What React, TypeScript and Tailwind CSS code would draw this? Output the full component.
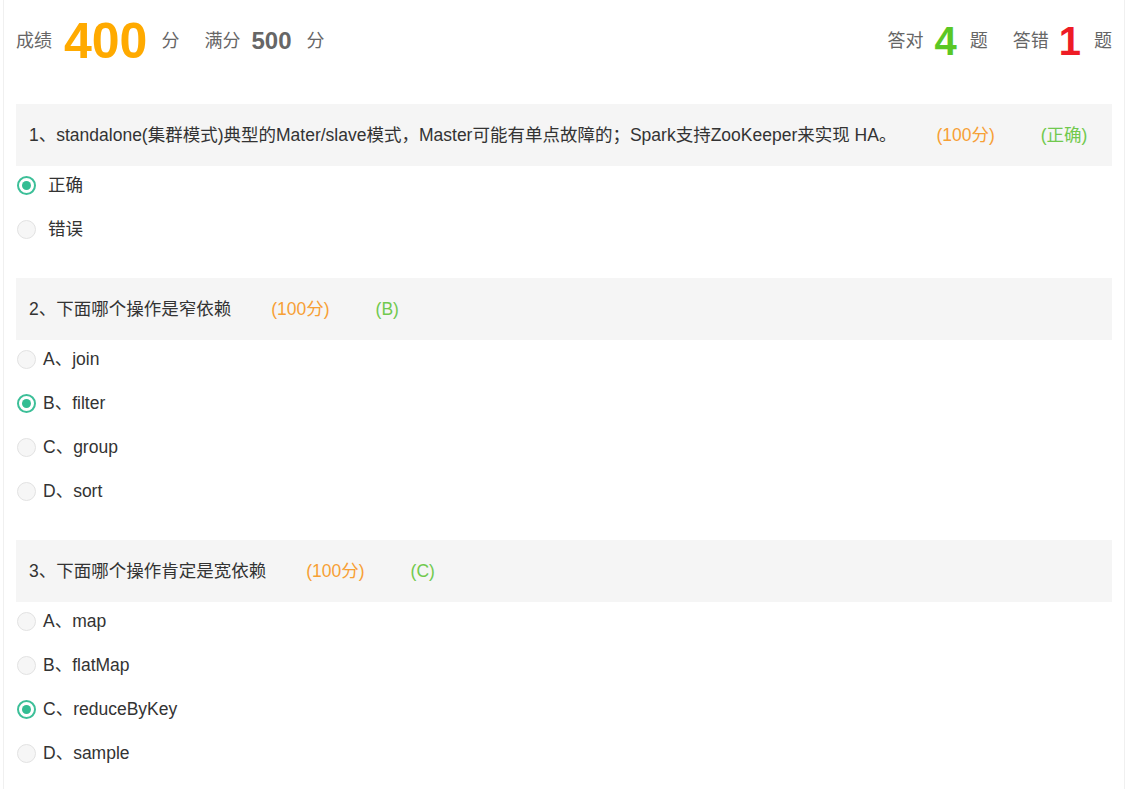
import React from "react";

const FONT = { fontFamily: '"Liberation Sans", Arial, "Noto Sans CJK SC", sans-serif' };

type Q = {
  title: string;
  answer: string;
  options: string[];
  selected: number;
  wide?: boolean;
};

const questions: Q[] = [
  {
    title: "1、standalone(集群模式)典型的Mater/slave模式，Master可能有单点故障的；Spark支持ZooKeeper来实现 HA。",
    answer: "(正确)",
    options: ["正确", "错误"],
    selected: 0,
    wide: true,
  },
  {
    title: "2、下面哪个操作是窄依赖",
    answer: "(B)",
    options: ["A、join", "B、filter", "C、group", "D、sort"],
    selected: 1,
  },
  {
    title: "3、下面哪个操作肯定是宽依赖",
    answer: "(C)",
    options: ["A、map", "B、flatMap", "C、reduceByKey", "D、sample"],
    selected: 2,
  },
];

function Radio({ checked }: { checked: boolean }) {
  return checked ? (
    <span className="flex h-[19px] w-[19px] shrink-0 items-center justify-center rounded-full border-2 border-[#3cbf98] bg-white">
      <span className="h-[9px] w-[9px] rounded-full bg-[#33bd93]" />
    </span>
  ) : (
    <span className="h-[19px] w-[19px] shrink-0 rounded-full border border-[#e2e2e2] bg-[#f6f6f6]" />
  );
}

export default function App() {
  return (
    <div className="min-h-[789px] bg-white pl-[3px]" style={FONT}>
      <div className="min-h-[789px] w-[1122px] border-x-[1.5px] border-[#f0f0f0] bg-white px-[12px]">
        {/* header */}
        <div className="flex h-[82px] items-center justify-between">
          <div className="flex items-center text-[#666]">
            <span className="text-[18px]">成绩</span>
            <span className="ml-[12px] text-[50px] font-bold leading-none text-[#ffaa00]">400</span>
            <span className="ml-[14px] text-[18px]">分</span>
            <span className="ml-[25px] text-[18px]">满分</span>
            <span className="ml-[11px] text-[24px] font-bold leading-none text-[#666]">500</span>
            <span className="ml-[15px] text-[18px]">分</span>
          </div>
          <div className="flex items-center text-[#666]">
            <span className="text-[18px]">答对</span>
            <span className="ml-[11px] text-[40px] font-bold leading-none text-[#5ac725]">4</span>
            <span className="ml-[13px] text-[18px]">题</span>
            <span className="ml-[25px] text-[18px]">答错</span>
            <span className="ml-[10px] text-[40px] font-bold leading-none text-[#ee1c25]">1</span>
            <span className="ml-[13px] text-[18px]">题</span>
          </div>
        </div>

        {/* questions */}
        <div className="mt-[22px] flex flex-col gap-[30px]">
          {questions.map((q, qi) => (
            <div key={qi}>
              <div className="flex h-[62px] items-center bg-[#f5f5f5] px-[13px] text-[17.5px] text-[#333]">
                <span>{q.title}</span>
                <span className="ml-[40px] text-[#f7a035]">(100分)</span>
                <span className="ml-[46px] text-[#71c94e]">{q.answer}</span>
              </div>
              <div className="flex flex-col gap-[6px]">
                {q.options.map((o, oi) => (
                  <div key={oi} className="flex h-[38px] items-center pl-[1px] text-[17.5px] text-[#333]">
                    <Radio checked={oi === q.selected} />
                    <span className={q.wide ? "ml-[12px]" : "ml-[7px]"}>{o}</span>
                  </div>
                ))}
              </div>
            </div>
          ))}
        </div>
      </div>
    </div>
  );
}
